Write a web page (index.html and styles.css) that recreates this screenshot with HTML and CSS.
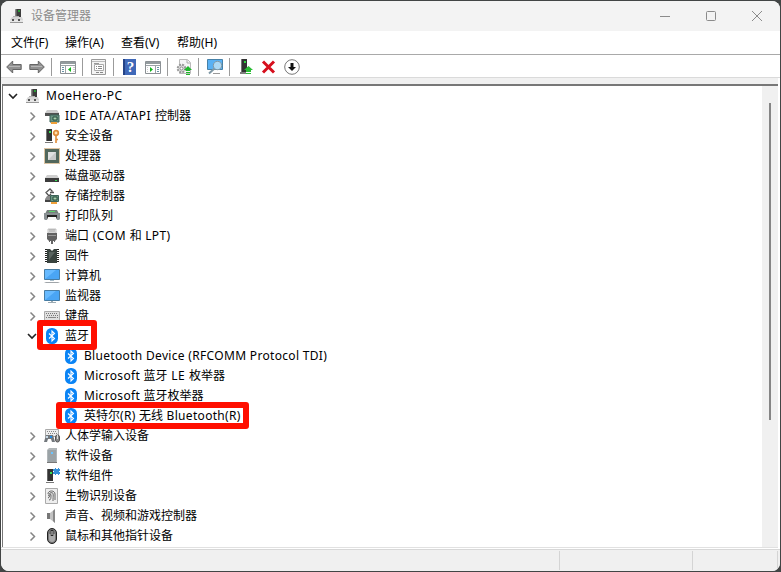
FILE: index.html
```html
<!DOCTYPE html>
<html lang="zh-CN">
<head>
    <meta charset="UTF-8">
    <meta name="viewport" content="width=device-width, initial-scale=1.0">
    <title>设备管理器</title>
    <link rel="stylesheet" href="styles.css">
</head>
<body>
    <!-- 图标定义 -->
    <svg class="sprite" width="0" height="0">
        <symbol id="i-open" viewBox="0 0 10 10"><path d="M1 3l4 4 4-4" fill="none" stroke="#222" stroke-width="1.600"/></symbol>
        <symbol id="i-closed" viewBox="0 0 10 10"><path d="M3.500 1.500l4 4-4 4" fill="none" stroke="#858585" stroke-width="1.500"/></symbol>
        <symbol id="i-pc" viewBox="0 0 16 16">
            <path d="M7 1h5v9H6V2z" fill="#3c3c3c"/><path d="M6 2l1.500-1v9H6z" fill="#888"/><path d="M9 2h2v2H9z" fill="#2a9c36"/>
            <path d="M3 9h10l1 3v3H1v-3z" fill="#d5d5d5"/><path d="M1 12h13v3H1z" fill="#e6e6e6"/><path d="M1 14.500h13" stroke="#999"/><path d="M4 8h6v1H4z" fill="#b3b3b3"/><path d="M3 11h2v2H3zM9 11h2v2H9z" fill="#555"/>
        </symbol>
        <symbol id="i-ide" viewBox="0 0 16 16">
            <path d="M3 2h10l2 3H1z" fill="#cbcbcb"/><path d="M1 5h14v3H1z" fill="#505050"/>
            <path d="M6 7h9v7H6z" fill="#6b9584" stroke="#3b6256"/><path d="M9 9h4v3H9z" fill="#a8d0ac" stroke="#244c3d"/><path d="M7 14h6v2H7z" fill="#f0a13b"/>
        </symbol>
        <symbol id="i-key" viewBox="0 0 16 16">
            <path d="M2 1h6v12H2z" fill="#333"/><path d="M2 1h1v12H2z" fill="#777"/><path d="M5 3h2v2H5z" fill="#35e052"/><path d="M1 14h8v1H1z" fill="#777"/>
            <circle cx="12" cy="5" r="2.300" fill="#ffe0b0" stroke="#df8b38" stroke-width="1.700"/><path d="M12 8v7M12 11.500h2" stroke="#df8b38" stroke-width="1.600"/>
        </symbol>
        <symbol id="i-cpu" viewBox="0 0 16 16">
            <path d="M.5.5h15v15H.5z" fill="none" stroke="#b88946" stroke-dasharray="1 1"/><path d="M1 1h14v14H1z" fill="#52675c"/><path d="M4 4h8v8H4z" fill="#e0e0e0"/><path d="M4 12l8-8v8z" fill="#c8c8c8"/>
        </symbol>
        <symbol id="i-disk" viewBox="0 0 16 16"><path d="M3 7h10l2 3H1z" fill="#cfcfcf"/><path d="M1 10h14v4H1z" fill="#3c3c3c"/><path d="M11 12h2v1h-2z" fill="#35e052"/></symbol>
        <symbol id="i-storage" viewBox="0 0 16 16">
            <path d="M8.500 3.500L6 1 2 4.500 5 8l2-2M6 4.500h4" fill="none" stroke="#555" stroke-width="1.300"/><path d="M1 11l2-3h4v5H1z" fill="#8a8a8a"/><path d="M1 12h6v2H1z" fill="#444"/>
            <path d="M6.500 7.500h8v6h-8z" fill="#6b9584" stroke="#3b6256"/><path d="M9 9h4v3H9z" fill="#a8d0ac" stroke="#244c3d"/><path d="M7 14h6v2H7z" fill="#f0a13b"/>
        </symbol>
        <symbol id="i-print" viewBox="0 0 16 16">
            <path d="M3 2h10l2 4H1z" fill="#75807c"/><path d="M5 3h6v1H5z" fill="#5bd56c"/><path d="M0 5h16v6l-1 1H1l-1-1z" fill="#899093"/><path d="M3 7h10v4H3z" fill="#222"/><path d="M4 9h8l1 3H3z" fill="#f6f6f6"/>
        </symbol>
        <symbol id="i-port" viewBox="0 0 16 16">
            <path d="M4 1h8v4H4z" fill="#eee" stroke="#aaa" stroke-width=".7"/><path d="M6 1v3M8 1v3M10 1v3" stroke="#999"/><path d="M3 5h10v6l-2 2H5l-2-2z" fill="#626262"/><path d="M4 7.500h8" stroke="#999"/><path d="M5 13h1v1H5zM7 13h2v3H7zM10 13h1v1h-1z" fill="#666"/>
        </symbol>
        <symbol id="i-chip" viewBox="0 0 16 16">
            <path d="M2.500 1v14M13.500 1v14" stroke="#222" stroke-width="3" stroke-dasharray="1 1"/><path d="M3 1h3l2 2 2-2h3v14H3z" fill="#39433f"/><path d="M5 4h6L5 12z" fill="#59635f"/>
        </symbol>
        <symbol id="i-computer" viewBox="0 0 16 16"><path d="M.5 1.500h15v10H.5z" fill="#67baff" stroke="#477ca3"/><path d="M1 11L12 2h3v9z" fill="#4aa5f4"/><path d="M6 12h4v1H6z" fill="#a9bdc9"/><path d="M2 14h12l2 1H0z" fill="#a0a5a9"/></symbol>
        <symbol id="i-monitor" viewBox="0 0 16 16"><path d="M.5 2.500h15v10H.5z" fill="#67baff" stroke="#477ca3"/><path d="M1 12L12 3h3v9z" fill="#4aa5f4"/><path d="M7 13h2v1H7zM4 14h8v1H4z" fill="#9cabb3"/></symbol>
        <symbol id="i-keyboard" viewBox="0 0 16 16"><path d="M.5 3.500h15v9H.5z" fill="#e0e0e0" stroke="#aaa"/><path d="M2 5.500h12M3 7.500h11M2 9.500h1M13 9.500h1" stroke="#777" stroke-dasharray="1 1"/><path d="M4 9.500h8" stroke="#888"/><path d="M0 12h16v1H0z" fill="#555"/></symbol>
        <symbol id="i-bt" viewBox="0 0 16 16"><rect x="2" y="0" width="12" height="16" rx="5.500" fill="#0a84f5"/><path d="M5 5.500l5.500 5L8 13V3l2.500 2.500-5.500 5" fill="none" stroke="#fff" stroke-width="1.100"/></symbol>
        <symbol id="i-hid" viewBox="0 0 16 16">
            <path d="M1.500 1.500h13v7h-13z" fill="#eee" stroke="#aaa"/><path d="M3 3.500h10M4 5.500h9" stroke="#888" stroke-dasharray="1 1"/>
            <path d="M2 7h7l2 7H8L7 11H4l-1 3H0z" fill="#73787d"/><path d="M2 8h2v2H2z" fill="#c7d8e5"/><path d="M6 8h2v2H6z" fill="#238be2"/><rect x="11.500" y="7" width="4" height="7" rx="2" fill="#888" stroke="#555"/><path d="M13.500 7v4" stroke="#ddd"/>
        </symbol>
        <symbol id="i-soft" viewBox="0 0 16 16"><path d="M3 2l2-2h8v15H3z" fill="#b1b6b8"/><path d="M4 2h8v12H4z" fill="#9ba3a7"/><path d="M7 4h2v2H7z" fill="#6bc5ff"/><path d="M3 14.500h10" stroke="#777"/></symbol>
        <symbol id="i-component" viewBox="0 0 16 16"><path d="M3 1h6v12H3z" fill="#333"/><path d="M3 1h1v12H3z" fill="#666"/><path d="M6 4h2v2H6z" fill="#35e052"/><path d="M2 14.500h8" stroke="#777"/><path d="M9 1h2V0h1v1h2V0h1v1h1v2h-1v1h1v2h-1v1h-1V6h-2v1h-1V6H9V4h1V3H9z" fill="#3490d9"/></symbol>
        <symbol id="i-finger" viewBox="0 0 16 16"><path d="M1.500.5h12v15h-12z" fill="#eee" stroke="#aaa"/><path d="M4 6c0-4 7-4 7 0v3M4 8c1 0 1-3.500 3.500-3.500S9 8 9 13M4 10c2 0 1-4 3.500-4M5 12c2 0 2-2 2-5M11 9v3" fill="none" stroke="#555" stroke-width=".9"/></symbol>
        <symbol id="i-sound" viewBox="0 0 16 16"><path d="M3 5h3v6H3z" fill="#777"/><path d="M6 5l5-4v14l-5-4z" fill="#c2c2c2"/><path d="M9 3l2-2v14l-2-2z" fill="#888"/></symbol>
        <symbol id="i-mouse" viewBox="0 0 16 16"><rect x="3.500" y=".5" width="9" height="15" rx="4.500" fill="#777" stroke="#222"/><path d="M5 6h6v5c0 4-6 4-6 0z" fill="#aaa"/><path d="M8 2v6" stroke="#222" stroke-width="2.500"/><path d="M8 3v4" stroke="#ddd"/></symbol>
    </svg>

    <div class="window">
        <header class="titlebar">
            <svg class="icon"><use href="#i-pc"/></svg>
            <h1>设备管理器</h1>
            <div class="controls">
                <svg viewBox="0 0 12 12"><path d="M1 6.500h10"/></svg>
                <svg viewBox="0 0 12 12"><rect x="1.500" y="1.500" width="9" height="9" rx="1"/></svg>
                <svg viewBox="0 0 12 12"><path d="M1 1l10 10M11 1L1 11"/></svg>
            </div>
        </header>

        <nav class="menu">
            <span>文件(F)</span>
            <span>操作(A)</span>
            <span>查看(V)</span>
            <span>帮助(H)</span>
        </nav>

        <div class="toolbar">
            <svg class="tool" viewBox="0 0 16 16"><path d="M.7 8l6-6v3.500h8.500v5H6.700V14z" fill="#919191" stroke="#666"/><path d="M3 7.500h11" stroke="#b7b7b7"/></svg>
            <svg class="tool forward" viewBox="0 0 16 16"><path d="M15.300 8l-6-6v3.500H.8v5h8.500V14z" fill="#919191" stroke="#666"/><path d="M2 7.500h11" stroke="#b7b7b7"/></svg>
            <i class="sep"></i>
            <svg class="tool" viewBox="0 0 16 16"><path d="M.5 2.500h15v12H.5z" fill="#fff" stroke="#8c9195"/><path d="M1 3h14v2H1z" fill="#939b9e"/><path d="M1 6.500h14M5.500 7v7" stroke="#9ba2a6"/><path d="M2 8.500h2m-2 2h2m-2 2h2" stroke="#6993a6"/><path d="M11 8v5l-3-2.500z" fill="#12b51c"/><path d="M13 8.500h2m-2 2h2m-2 2h2" stroke="#ccc"/></svg>
            <i class="sep"></i>
            <svg class="tool" viewBox="0 0 16 16"><path d="M.5.5h14v15H.5z" fill="#f4f4f4" stroke="#999"/><path d="M1 2.500h13" stroke="#bbb"/><path d="M3.500 5.500h9v6h-9z" fill="#fff" stroke="#aaa"/><path d="M3 4.500h5" stroke="#999"/><path d="M5 7.500h1m1 0h4M5 9.500h1m1 0h4" stroke="#888"/><path d="M5 13.500h3m1 0h3" stroke="#888"/></svg>
            <i class="sep"></i>
            <svg class="tool" viewBox="0 0 16 16"><path d="M1 0h13v16H1z" fill="#3f68b8"/><path d="M1 0h2v16H1z" fill="#244386"/><text x="8.500" y="13" class="question">?</text></svg>
            <svg class="tool run" viewBox="0 0 16 16"><path d="M.5 2.500h15v12H.5z" fill="#fff" stroke="#8c9195"/><path d="M1 3h14v2H1z" fill="#939b9e"/><path d="M1 6.500h14M10.500 7v7" stroke="#9ba2a6"/><path d="M12 8.500h2m-2 2h2m-2 2h2" stroke="#6993a6"/><path d="M5 8v5l3-2.500z" fill="#12b51c"/><path d="M2 8.500h1m-1 2h1m-1 2h1" stroke="#ccc"/></svg>
            <i class="sep"></i>
            <svg class="tool" viewBox="0 0 16 16"><path d="M3.500.5h8l3 3v11h-11z" fill="#f5f5f5" stroke="#bbb"/><path d="M11 1v3h3" fill="none" stroke="#aaa"/><circle cx="5.500" cy="9.500" r="3.800" fill="#ddd" stroke="#999" stroke-width="2" stroke-dasharray="2 1"/><circle cx="5.500" cy="9.500" r="1.500" fill="#fff" stroke="#888"/><path d="M8 11l4-4 4 4h-2v1h-4v-1zM10 13h4v1h-4zM10 15h4v1h-4z" fill="#20b72b"/></svg>
            <i class="sep"></i>
            <svg class="tool" viewBox="0 0 16 16"><path d="M.5.5h15v10H.5z" fill="#59b1f4" stroke="#4681a8"/><path d="M6 14.500h7" stroke="#999"/><path d="M7.500 9.500L2 14.500" stroke="#8199a6" stroke-width="2"/><circle cx="10.500" cy="6.500" r="4.200" fill="#abd9f6" stroke="#8199a6"/></svg>
            <i class="sep"></i>
            <svg class="tool" viewBox="0 0 16 16"><path d="M3 0h6v13H3z" fill="#333"/><path d="M3 0h1v13H3z" fill="#777"/><path d="M6 2h2v2H6z" fill="#2fd53c"/><path d="M2 14h6" stroke="#555" stroke-width="1.500"/><path d="M6 11l4.500-4 4.500 4h-2v2H8v-2zM8 14h5v1H8z" fill="#2cbd36"/></svg>
            <svg class="tool remove" viewBox="0 0 16 16"><path d="M3 2.500l11 11M14 2.500l-11 11" stroke="#d60f1d" stroke-width="3"/></svg>
            <svg class="tool disable" viewBox="0 0 16 16"><circle cx="8" cy="8" r="7.300" fill="#fff" stroke="#777"/><path d="M6.500 4h3v4H12l-4 4-4-4h2.500z" fill="#111"/></svg>
        </div>

        <main class="content">
            <ul class="tree">
                <li class="row root"><svg class="arrow"><use href="#i-open"/></svg><svg class="icon"><use href="#i-pc"/></svg><span><b class="caps">MoeHero-PC</b></span></li>
                <li class="row"><svg class="arrow"><use href="#i-closed"/></svg><svg class="icon"><use href="#i-ide"/></svg><span><b class="caps">IDE ATA/ATAPI </b>控制器</span></li>
                <li class="row"><svg class="arrow"><use href="#i-closed"/></svg><svg class="icon"><use href="#i-key"/></svg><span>安全设备</span></li>
                <li class="row"><svg class="arrow"><use href="#i-closed"/></svg><svg class="icon"><use href="#i-cpu"/></svg><span>处理器</span></li>
                <li class="row"><svg class="arrow"><use href="#i-closed"/></svg><svg class="icon"><use href="#i-disk"/></svg><span>磁盘驱动器</span></li>
                <li class="row"><svg class="arrow"><use href="#i-closed"/></svg><svg class="icon"><use href="#i-storage"/></svg><span>存储控制器</span></li>
                <li class="row"><svg class="arrow"><use href="#i-closed"/></svg><svg class="icon"><use href="#i-print"/></svg><span>打印队列</span></li>
                <li class="row"><svg class="arrow"><use href="#i-closed"/></svg><svg class="icon"><use href="#i-port"/></svg><span>端口<b class="caps"> (COM </b>和<b> LPT)</b></span></li>
                <li class="row"><svg class="arrow"><use href="#i-closed"/></svg><svg class="icon"><use href="#i-chip"/></svg><span>固件</span></li>
                <li class="row"><svg class="arrow"><use href="#i-closed"/></svg><svg class="icon"><use href="#i-computer"/></svg><span>计算机</span></li>
                <li class="row"><svg class="arrow"><use href="#i-closed"/></svg><svg class="icon"><use href="#i-monitor"/></svg><span>监视器</span></li>
                <li class="row"><svg class="arrow"><use href="#i-closed"/></svg><svg class="icon"><use href="#i-keyboard"/></svg><span>键盘</span></li>
                <li class="row marked"><svg class="arrow"><use href="#i-open"/></svg><svg class="icon"><use href="#i-bt"/></svg><span>蓝牙</span></li>
                <li class="row child"><svg class="icon"><use href="#i-bt"/></svg><span><b>Bluetooth Device (RFCOMM Protocol TDI)</b></span></li>
                <li class="row child"><svg class="icon"><use href="#i-bt"/></svg><span><b>Microsoft </b>蓝牙<b class="caps"> LE </b>枚举器</span></li>
                <li class="row child"><svg class="icon"><use href="#i-bt"/></svg><span><b>Microsoft </b>蓝牙枚举器</span></li>
                <li class="row child marked"><svg class="icon"><use href="#i-bt"/></svg><span>英特尔<b>(R) </b>无线<b> Bluetooth(R)</b></span></li>
                <li class="row"><svg class="arrow"><use href="#i-closed"/></svg><svg class="icon"><use href="#i-hid"/></svg><span>人体学输入设备</span></li>
                <li class="row"><svg class="arrow"><use href="#i-closed"/></svg><svg class="icon"><use href="#i-soft"/></svg><span>软件设备</span></li>
                <li class="row"><svg class="arrow"><use href="#i-closed"/></svg><svg class="icon"><use href="#i-component"/></svg><span>软件组件</span></li>
                <li class="row"><svg class="arrow"><use href="#i-closed"/></svg><svg class="icon"><use href="#i-finger"/></svg><span>生物识别设备</span></li>
                <li class="row"><svg class="arrow"><use href="#i-closed"/></svg><svg class="icon"><use href="#i-sound"/></svg><span>声音、视频和游戏控制器</span></li>
                <li class="row"><svg class="arrow"><use href="#i-closed"/></svg><svg class="icon"><use href="#i-mouse"/></svg><span>鼠标和其他指针设备</span></li>
            </ul>
            <div class="scrollbar"><div class="thumb"></div></div>
        </main>

        <footer class="status">
            <div></div>
            <div></div>
            <div></div>
        </footer>
    </div>
</body>
</html>
```
FILE: styles.css
```css
*, *::after {
    box-sizing: border-box;
}
body {
    margin: 0;
    padding: 1px;
    height: 572px;
    overflow: hidden;
    background-color: #424545;
    font-family: "Noto Sans", "Noto Sans CJK SC", sans-serif;
    font-size: 12px;
    color: #000;
}
.sprite {
    display: block;
}
.window {
    height: 570px;
    display: flex;
    flex-direction: column;
    background-color: #fff;
    border-radius: 8px;
    overflow: hidden;
}
.titlebar {
    height: 30px;
    display: flex;
    align-items: center;
    padding-left: 8px;
    background-color: #f3f3f3;
}
.titlebar h1 {
    margin: 0 0 0 6px;
    font-size: 12px;
    font-weight: normal;
    line-height: 20px;
    color: #8c8c8c;
}
.icon {
    width: 16px;
    height: 16px;
    flex: none;
}
.controls {
    margin-left: auto;
    display: flex;
    gap: 34px;
    padding-right: 17px;
}
.controls svg {
    width: 12px;
    height: 12px;
    fill: none;
    stroke: #8b8b8b;
}
.menu {
    height: 23px;
    display: flex;
    align-items: center;
    gap: 16px;
    padding-left: 10px;
}
.menu span {
    width: 40px;
    line-height: 20px;
    white-space: nowrap;
}
.menu span:first-child {
    width: 38px;
}
.toolbar {
    height: 24px;
    display: flex;
    align-items: center;
    padding: 1px 0 0 5px;
    border-top: 1px solid #a9a9a9;
    border-bottom: 1px solid #dadada;
}
.tool {
    width: 16px;
    height: 16px;
    flex: none;
}
.forward {
    margin-left: 7px;
}
.run {
    margin-left: 7px;
}
.remove {
    margin-left: 6px;
}
.disable {
    margin-left: 8px;
}
.question {
    font-family: "Liberation Serif", serif;
    font-size: 15px;
    font-weight: bold;
    text-anchor: middle;
    fill: #fff;
}
.sep {
    width: 1px;
    height: 18px;
    margin: 0 8px 0 6px;
    background-color: #9b9b9b;
}
.content {
    height: 470px;
    display: flex;
    margin-right: 2px;
    border-top: 6px solid #f0f0f0;
    border-bottom: 1px solid #e1e1e1;
}
.tree {
    flex: 1;
    margin: 0 0 0 1px;
    padding: 0;
    list-style: none;
    border-top: 2px solid #777;
    border-left: 1px solid #777;
}
.row {
    height: 20px;
    display: flex;
    align-items: center;
    padding-left: 24px;
    white-space: nowrap;
}
.root {
    padding-left: 5px;
}
.child {
    padding-left: 60px;
}
.arrow {
    width: 10px;
    height: 10px;
    margin-right: 7px;
    flex: none;
}
.row span {
    margin-left: 5px;
    line-height: 20px;
}
/* 英文部分字距 */
.row b {
    font-weight: normal;
    letter-spacing: 0.32px;
    white-space: pre;
}
.row b.caps {
    letter-spacing: 0.55px;
}
.marked {
    position: relative;
}
/* 红色标记框 */
.marked::after {
    content: "";
    position: absolute;
    z-index: 1;
    left: 34px;
    top: -6px;
    width: 60px;
    height: 30px;
    border: 6px solid #ff0f00;
    border-radius: 3px;
}
.child.marked::after {
    left: 53px;
    top: -4px;
    width: 193px;
    height: 27px;
}
.scrollbar {
    width: 16px;
    padding: 17px 0 0 7px;
    background-color: #f0f0f0;
    border-top: 2px solid #777;
}
.thumb {
    width: 2px;
    height: 317px;
    background-color: #858585;
}
.status {
    flex: 1;
    display: flex;
    margin-top: 1px;
    padding: 1px 2px 1px 0;
    background-color: #f0f0f0;
    border-top: 1px solid #d7d7d7;
}
.status div {
    border-right: 1px solid #d4d4d4;
}
.status div:nth-child(1) {
    width: 559px;
}
.status div:nth-child(2) {
    width: 133px;
}
.status div:nth-child(3) {
    flex: 1;
}
```
